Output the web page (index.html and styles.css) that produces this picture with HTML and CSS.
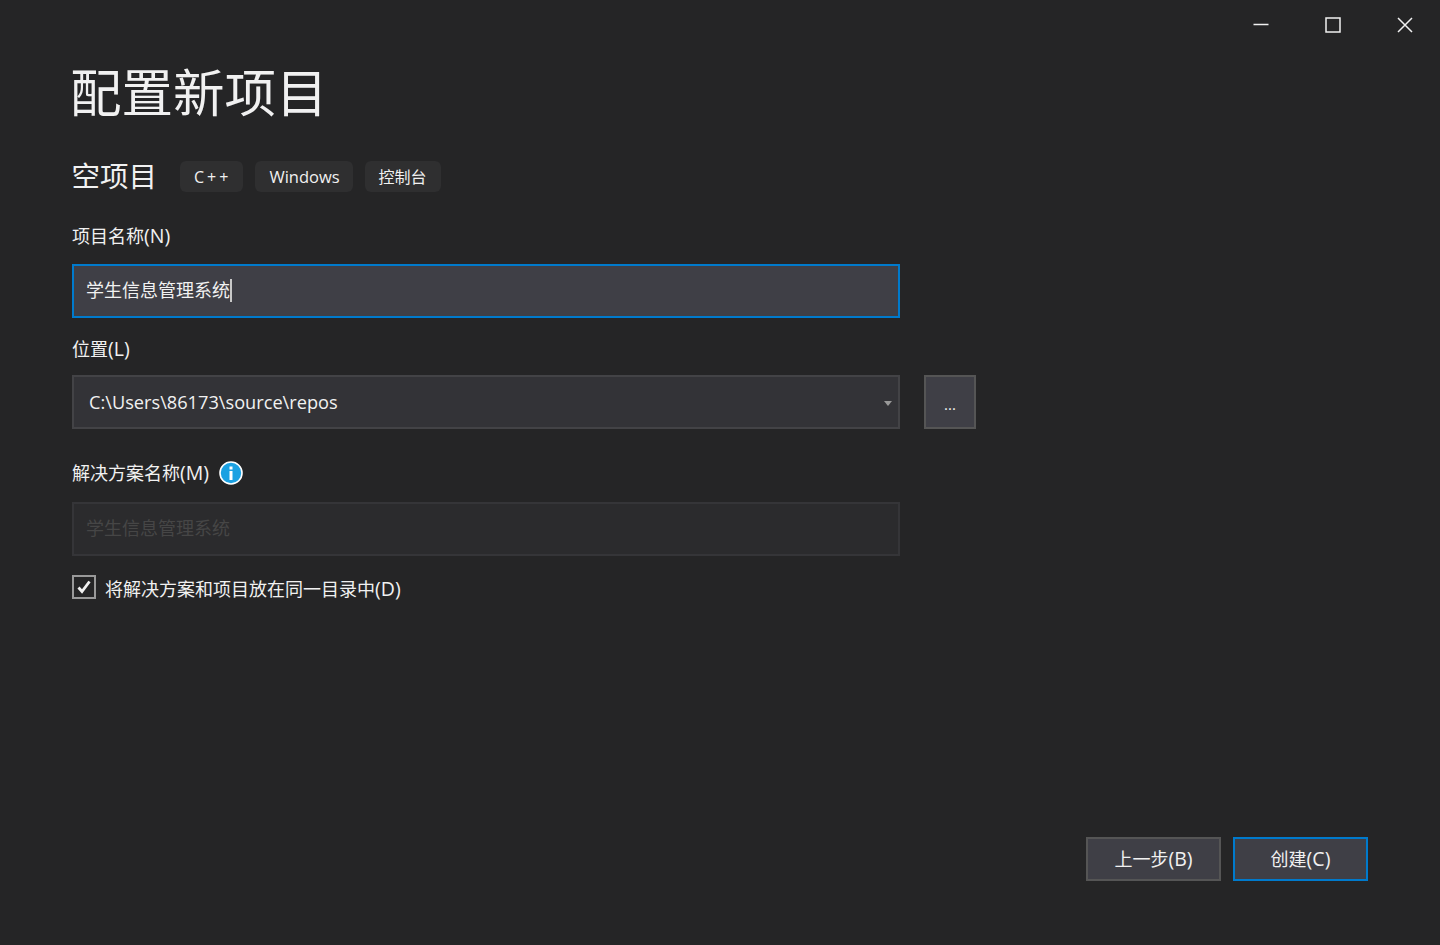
FILE: index.html
```html
<!DOCTYPE html>
<html>
<head>
  <meta charset="UTF-8">
  <title>配置新项目</title>
  <link rel="stylesheet" href="styles.css">
</head>
<body>
  <div class="window">

    <!-- Window buttons -->
    <div class="title-bar">
      <svg class="win-icon" viewBox="0 0 16 16"><path d="M0.5 7.5H15.5" /></svg>
      <svg class="win-icon" viewBox="0 0 16 16"><rect x="1" y="1" width="14" height="14" /></svg>
      <svg class="win-icon" viewBox="0 0 16 16"><path d="M1 1L15 15M15 1L1 15" /></svg>
    </div>

    <div class="content">
      <h1>配置新项目</h1>

      <div class="template-row">
        <h2>空项目</h2>
        <span class="tag tag-spaced">C++</span>
        <span class="tag tag-latin">Windows</span>
        <span class="tag">控制台</span>
      </div>

      <label class="field-label name-label">项目名称<span class="access">(N)</span></label>
      <div class="input input-focus">
        <span>学生信息管理系统</span><span class="caret"></span>
      </div>

      <label class="field-label location-label">位置<span class="access">(L)</span></label>
      <div class="location-row">
        <div class="input input-combo">
          <span class="combo-text">C:\Users\86173\source\repos</span>
          <span class="combo-arrow"></span>
        </div>
        <button class="browse-button">...</button>
      </div>

      <div class="field-label solution-label">
        <span>解决方案名称<span class="access">(M)</span></span>
        <svg class="info-icon" viewBox="0 0 24 24">
          <circle cx="12" cy="12" r="11" fill="#1ba1e2" stroke="#fff" stroke-width="1.6" />
          <rect x="10.5" y="10" width="3" height="9" fill="#fff" />
          <rect x="10.5" y="5.5" width="3" height="3" fill="#fff" />
        </svg>
      </div>
      <div class="input input-disabled">学生信息管理系统</div>

      <div class="check-row">
        <span class="checkbox">
          <svg viewBox="0 0 20 20"><path d="M4.5 10.5L8 14.5L15.5 4.5" /></svg>
        </span>
        <span>将解决方案和项目放在同一目录中<span class="access">(D)</span></span>
      </div>
    </div>

    <div class="footer">
      <button class="footer-button">上一步<span class="access">(B)</span></button>
      <button class="footer-button primary">创建<span class="access">(C)</span></button>
    </div>
  </div>
</body>
</html>
```

FILE: styles.css
```css
* {
  box-sizing: border-box;
}

body {
  margin: 0;
  background-color: #252526;
  color: #f1f1f1;
  font-family: "Open Sans", "Noto Sans CJK SC", sans-serif;
  font-size: 18px;
}

.window {
  display: flex;
  flex-direction: column;
  height: 945px;
  overflow: hidden;
}

.title-bar {
  display: flex;
  justify-content: flex-end;
  gap: 56px;
  padding: 17px 27px 0 0;
  height: 60px;
}

.win-icon {
  width: 16px;
  height: 16px;
  fill: none;
  stroke: #f1f1f1;
  stroke-width: 1.5;
}

.content {
  padding: 0 72px;
  flex: 1;
}

h1 {
  margin: -1px 0 0 -2px;
  font-size: 51.5px;
  font-weight: 400;
  line-height: 66px;
}

.template-row {
  display: flex;
  align-items: center;
  gap: 12px;
  margin-top: 36px;
  height: 31px;
}

h2 {
  margin: 0 11px 0 -0.5px;
  font-size: 28.5px;
  font-weight: 400;
  line-height: 31px;
}

.tag {
  padding: 1px 14px 0;
  height: 31px;
  line-height: 30px;
  font-size: 16px;
  background-color: #2f2f30;
  border-radius: 6px;
}

.tag-spaced {
  letter-spacing: 3px;
  padding-right: 12px;
}

.tag-latin {
  font-size: 16.5px;
  padding-right: 13px;
}

.access {
  font-size: 19.5px;
}

.field-label {
  display: block;
  line-height: 26px;
}

.name-label {
  margin-top: 31px;
}

.location-label {
  margin-top: 18px;
}

.solution-label {
  display: flex;
  align-items: center;
  gap: 10px;
  margin-top: 31px;
}

.input {
  display: flex;
  align-items: center;
  width: 828px;
  height: 54px;
  padding: 0 12px;
  border: 2px solid #434346;
  background-color: #333337;
}

.input-focus {
  margin-top: 15px;
  padding-bottom: 4px;
  background-color: #3f3f46;
  border-color: #007acc;
}

.caret {
  width: 2px;
  height: 23px;
  margin-bottom: -2px;
  background-color: #c8c8c8;
}

.location-row {
  display: flex;
  gap: 24px;
  margin-top: 13px;
}

.input-combo {
  justify-content: space-between;
  padding: 0 6px 0 15px;
}

.combo-text {
  font-size: 18.2px;
}

.combo-arrow {
  width: 0;
  height: 0;
  margin-top: 2px;
  border-left: 4.5px solid transparent;
  border-right: 4.5px solid transparent;
  border-top: 5px solid #999;
}

.browse-button {
  width: 52px;
  height: 54px;
  padding-top: 4px;
  border: 2px solid #555;
  background-color: #3f3f46;
  color: #f1f1f1;
  font-family: inherit;
  font-size: 15px;
}

.info-icon {
  width: 24px;
  height: 24px;
}

.input-disabled {
  margin-top: 16px;
  padding-bottom: 4px;
  background-color: #2b2b2d;
  border-color: #353538;
  color: #464646;
}

.check-row {
  display: flex;
  align-items: center;
  gap: 9px;
  margin-top: 19px;
  height: 26px;
}

.checkbox {
  display: flex;
  align-items: center;
  justify-content: center;
  width: 24px;
  height: 24px;
  margin-top: -2px;
  border: 2px solid #999;
}

.checkbox svg {
  width: 20px;
  height: 20px;
  fill: none;
  stroke: #f1f1f1;
  stroke-width: 2.8;
}

.footer {
  display: flex;
  justify-content: flex-end;
  gap: 12px;
  padding: 0 72px 64px 0;
}

.footer-button {
  width: 135px;
  height: 44px;
  padding-bottom: 3px;
  border: 2px solid #555;
  background-color: #3f3f46;
  color: #f1f1f1;
  font-family: inherit;
  font-size: 18px;
}

.footer-button.primary {
  border-color: #007acc;
}
```
